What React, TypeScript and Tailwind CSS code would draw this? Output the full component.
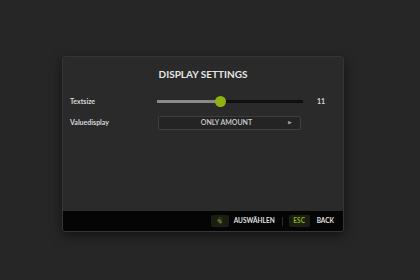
import React from "react";

const FONT = { fontFamily: "Lato, 'Open Sans', sans-serif" };

const MouseIcon = () => (
  <svg width="10" height="10" viewBox="0 0 10 10" fill="none">
    <path d="M4 2.5 L7.5 6 L5.5 8 L2 4.5 Z" fill="#5c6b2a" />
    <path d="M4 2.5 L5.5 1 M5.8 3.8 L7 2.6" stroke="#5c6b2a" strokeWidth="1" />
  </svg>
);

export default function App() {
  return (
    <div
      className="w-[420px] h-[280px] bg-[#262626] pt-[56px] pl-[62px] overflow-hidden"
      style={FONT}
    >
      <div className="w-[282px] h-[176px] flex flex-col rounded-[3px] border border-[#353535] bg-[#2a2a2a] shadow-[0_4px_12px_rgba(0,0,0,0.5)] overflow-hidden">
        <div className="flex-1 flex flex-col">
          <div className="h-[34px] flex items-center justify-center pt-[1px] text-[10px] font-bold text-[#e6e6e6]">
            DISPLAY SETTINGS
          </div>

          {/* Textsize row */}
          <div className="h-[21px] flex items-center pl-[7px] pr-[18px]">
            <div className="w-[87px] text-[7px] font-bold text-[#d8d8d8]">Textsize</div>
            <div className="relative w-[146px] h-[3px] flex">
              <div className="w-[63px] h-full bg-[#8a8a8a]" />
              <div className="flex-1 h-full bg-[#0f0f0f]" />
              <div className="absolute left-[58px] top-[-4px] w-[11px] h-[11px] rounded-full bg-[#8fb112]" />
            </div>
            <div className="flex-1 text-right text-[7px] font-bold text-[#d8d8d8]">11</div>
          </div>

          {/* Valuedisplay row */}
          <div className="h-[21px] flex items-center pl-[7px] pr-[18px]">
            <div className="w-[88px] text-[7px] font-bold text-[#d8d8d8]">Valuedisplay</div>
            <div className="w-[143px] h-[14px] flex items-center rounded-[2px] border border-[#3f3f3f] bg-[#242424]">
              <div className="flex-1 text-center text-[7px] font-semibold text-[#cfcfcf] pl-[6px]">ONLY AMOUNT</div>
              <div className="w-[12px] text-[5px] text-[#9a9a9a]">▶</div>
            </div>
          </div>
        </div>

        {/* Footer */}
        <div className="h-[20px] bg-[#050505] flex items-center justify-end pr-[9px] text-[6.5px] font-bold text-[#e0e0e0]">
          <div className="w-[18px] h-[12px] rounded-[2px] bg-[#1a1f12] flex items-center justify-center">
            <MouseIcon />
          </div>
          <span className="ml-[5px]">AUSWÄHLEN</span>
          <div className="ml-[7px] w-px h-[9px] bg-[#2a2a2a]" />
          <div className="ml-[6px] w-[21px] h-[12px] rounded-[2px] bg-[#1a1f12] flex items-center justify-center text-[#8fb112]">
            ESC
          </div>
          <span className="ml-[7px]">BACK</span>
        </div>
      </div>
    </div>
  );
}
